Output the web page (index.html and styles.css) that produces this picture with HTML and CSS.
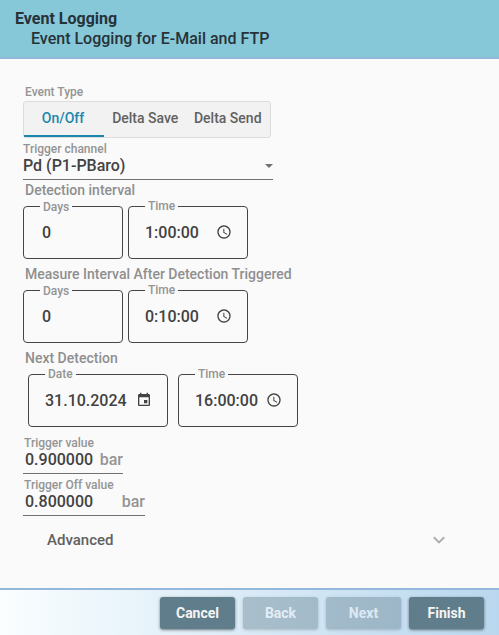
FILE: index.html
```html
<!DOCTYPE html>
<html lang="en">
<head>
<meta charset="utf-8">
<title>Event Logging</title>
<link rel="stylesheet" href="styles.css">
</head>
<body>
<svg class="defs" aria-hidden="true">
  <symbol id="clock" viewBox="0 0 24 24"><path d="M11.99 2C6.47 2 2 6.48 2 12s4.47 10 9.99 10C17.52 22 22 17.52 22 12S17.52 2 11.99 2zM12 20c-4.42 0-8-3.58-8-8s3.58-8 8-8 8 3.58 8 8-3.58 8-8 8zm.5-13H11v6l5.25 3.15.75-1.23-4.5-2.67z"/></symbol>
  <symbol id="calendar" viewBox="0 0 24 24"><path d="M17 12h-5v5h5v-5zM16 1v2H8V1H6v2H5c-1.11 0-1.99.9-1.99 2L3 19c0 1.1.89 2 2 2h14c1.1 0 2-.9 2-2V5c0-1.1-.9-2-2-2h-1V1h-2zm3 18H5V8h14v11z"/></symbol>
</svg>
<div class="dialog">
  <header class="header">
    <h1 class="title">Event Logging</h1>
    <p class="subtitle">Event Logging for E-Mail and FTP</p>
  </header>
  <main class="content">
    <div class="caption event-caption">Event Type</div>
    <div class="tabs">
      <div class="tab active">On/Off</div>
      <div class="tab">Delta Save</div>
      <div class="tab">Delta Send</div>
    </div>
    <div class="select">
      <div class="caption">Trigger channel</div>
      <div class="select-value"><span>Pd (P1-PBaro)</span><i class="arrow"></i></div>
    </div>
    <h2 class="section">Detection interval</h2>
    <div class="row">
      <div class="field days"><label>Days</label><span class="value">0</span></div>
      <div class="field time"><label>Time</label><span class="value">1:00:00</span><svg class="icon"><use href="#clock"/></svg></div>
    </div>
    <h2 class="section">Measure Interval After Detection Triggered</h2>
    <div class="row">
      <div class="field days"><label>Days</label><span class="value">0</span></div>
      <div class="field time"><label>Time</label><span class="value">0:10:00</span><svg class="icon"><use href="#clock"/></svg></div>
    </div>
    <h2 class="section">Next Detection</h2>
    <div class="row spaced">
      <div class="field date"><label>Date</label><span class="value">31.10.2024</span><svg class="icon"><use href="#calendar"/></svg></div>
      <div class="field time"><label>Time</label><span class="value">16:00:00</span><svg class="icon"><use href="#clock"/></svg></div>
    </div>
    <div class="measure">
      <div class="caption">Trigger value</div>
      <div class="reading"><span>0.900000</span><span class="unit">bar</span></div>
    </div>
    <div class="measure wide">
      <div class="caption">Trigger Off value</div>
      <div class="reading"><span>0.800000</span><span class="unit">bar</span></div>
    </div>
    <div class="advanced">
      <span>Advanced</span>
      <svg class="chevron" viewBox="0 0 12 8"><path d="M.8 1.2 6 6.4l5.2-5.2"/></svg>
    </div>
  </main>
  <footer class="footer">
    <button class="button">Cancel</button>
    <button class="button" disabled>Back</button>
    <button class="button" disabled>Next</button>
    <button class="button">Finish</button>
  </footer>
</div>
</body>
</html>
```
FILE: styles.css
```css
* { box-sizing: border-box; }
body {
  margin: 0;
  font-family: Roboto, "Liberation Sans", sans-serif;
  font-weight: 500;
  color: #424242;
  background: #fafafa;
}
.defs { display: none; }
.dialog {
  display: flex;
  flex-direction: column;
  width: 499px;
  height: 635px;
}
.header {
  height: 59px;
  padding: 9px 15px 0;
  background: #86c8d8;
  border-bottom: 2px solid #94b8dc;
  color: #263238;
}
.title {
  margin: 0;
  font-size: 16px;
  line-height: 20px;
  font-weight: 700;
}
.subtitle {
  margin: 0 0 0 16px;
  font-size: 16px;
  line-height: 20px;
}
.content { flex: 1; padding: 25px 23px 0; }
.caption {
  font-size: 12px;
  line-height: 16px;
  font-weight: 500;
  color: #949494;
}
.event-caption { padding-left: 2px; margin-bottom: 1px; }
.tabs {
  display: flex;
  width: 248px;
  height: 37px;
  border: 1px solid #dcdcdc;
  border-radius: 3px;
  background: #f2f2f2;
}
.tab {
  width: 82.5px;
  text-align: center;
  font-size: 14px;
  line-height: 33px;
  color: #616161;
  white-space: nowrap;
}
.tab.active {
  width: 80px;
  padding-right: 2px;
  color: #1c87ad;
  border-bottom: 2px solid #1c87ad;
}
.select { width: 250px; height: 42px; padding-top: 3px; border-bottom: 1px solid #707070; }
.select-value {
  display: flex;
  align-items: center;
  justify-content: space-between;
  font-size: 16px;
  line-height: 18px;
}
.arrow {
  border: 4px solid transparent;
  border-top-color: #707070;
  border-bottom: 0;
}
.section {
  margin: 0;
  padding-left: 2px;
  height: 26px;
  font-size: 14px;
  line-height: 20px;
  font-weight: 500;
  color: #8f8f8f;
}
.row {
  display: flex;
  gap: 5px;
  height: 53px;
  margin-bottom: 5px;
}
.row.spaced { gap: 10px; padding-left: 5px; margin-bottom: 8px; }
.field {
  position: relative;
  display: flex;
  align-items: center;
  justify-content: space-between;
  width: 120px;
  padding: 0 15px 0 16px;
  border: 1px solid #454545;
  border-radius: 4px;
  font-size: 16px;
}
.field.days { width: 100px; padding-left: 18px; }
.field.date { width: 140px; }
.field label {
  position: absolute;
  left: 16px;
  top: -9px;
  padding: 0 3px;
  background: #fafafa;
  font-size: 12px;
  line-height: 16px;
  font-weight: 500;
  color: #949494;
}
.field.days label { top: -8px; }
.icon { width: 16px; height: 16px; margin-bottom: 1px; fill: #424242; }
.measure { width: 100px; height: 39px; margin-bottom: 3px; border-bottom: 1px solid #707070; }
.measure.wide { width: 122px; margin-bottom: 14px; }
.measure .caption { padding-left: 1px; }
.reading {
  display: flex;
  justify-content: space-between;
  padding-left: 2px;
  font-size: 16px;
  line-height: 18px;
}
.unit { color: #949494; }
.advanced {
  display: flex;
  align-items: center;
  justify-content: space-between;
  padding: 0 31px 0 24px;
  font-size: 15px;
  line-height: 20px;
  color: #616161;
}
.chevron { width: 12px; height: 8px; fill: none; stroke: #adadad; stroke-width: 2; }
.footer {
  display: flex;
  justify-content: flex-end;
  gap: 8px;
  height: 47px;
  padding: 7px 15px 0 0;
  border-top: 2px solid #94b8dc;
  background: linear-gradient(to right, #fafeff, #b9d7ee);
}
.button {
  width: 75px;
  height: 32px;
  padding: 0;
  border: 0;
  border-radius: 3px;
  background: #607d8b;
  color: #f5f5f5;
  font: 700 14px Roboto, sans-serif;
  box-shadow: 0 1px 3px rgba(0, 0, 0, .5);
}
.button:disabled { opacity: .4; }
```
